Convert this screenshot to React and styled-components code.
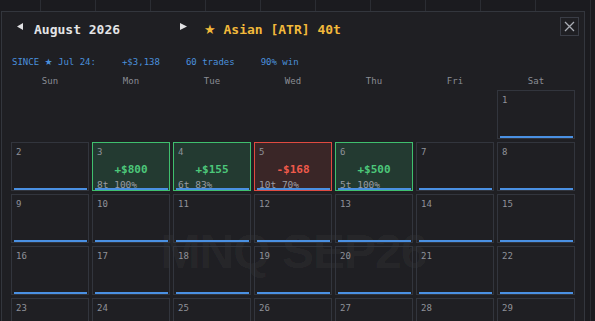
import React from 'react'
import styled, { createGlobalStyle, css } from 'styled-components'

const GlobalStyle = createGlobalStyle`
  html, body {
    margin: 0;
    padding: 0;
    background: #1b1b1f;
  }
  * {
    box-sizing: border-box;
  }
`

const MONO = `"DejaVu Sans Mono", "Liberation Mono", monospace`

const Page = styled.div`
  position: relative;
  width: 595px;
  height: 321px;
  overflow: hidden;
  padding: 11px 0 0 1px;
  background-color: #1b1b1f;
  background-image: linear-gradient(to right, #2b2d33 1px, transparent 1px);
  background-size: 55px 100%;
  background-position: 40px 0;
  font-family: ${MONO};
`

const Modal = styled.div`
  width: 584px;
  min-height: 360px;
  padding: 5px 8px 0 9px;
  border: 1px solid #33363d;
  background: #1f1f23;
`

const Header = styled.div`
  display: flex;
  align-items: center;
  height: 19px;
`

const NavButton = styled.button`
  display: flex;
  align-items: center;
  justify-content: center;
  padding: 0;
  margin-left: ${p => p.$offset || 0}px;
  background: none;
  border: none;
  color: #e2e2e4;
  cursor: pointer;
`

const Title = styled.h2`
  width: 146px;
  margin: 5px 0 0 10px;
  font-size: 13px;
  font-weight: bold;
  line-height: 19px;
  color: #e4e4e6;
`

const Strategy = styled.span`
  margin: 5px 0 0 17px;
  font-size: 13px;
  font-weight: bold;
  line-height: 19px;
  color: #f2b93b;
`

const Star = styled.span`
  font-family: "DejaVu Sans", sans-serif;
  font-weight: normal;
`

const CloseButton = styled.button`
  display: flex;
  align-items: center;
  justify-content: center;
  width: 19px;
  height: 19px;
  padding: 0;
  margin: 0 -3px 0 auto;
  background: none;
  border: 1px solid #3a3d46;
  cursor: pointer;
`

const Stats = styled.div`
  display: flex;
  gap: 26px;
  margin-top: 20px;
  padding-left: 1px;
  font-size: 9px;
  line-height: 12px;
  color: #4a8fdc;
`

const Columns = styled.div`
  display: grid;
  grid-template-columns: repeat(7, 78px);
  column-gap: 3px;
`

const Weekdays = styled(Columns)`
  margin-top: 6px;
  height: 14px;
  font-size: 9px;
  line-height: 14px;
  color: #8a8d94;
  text-align: center;
`

const Board = styled(Columns)`
  position: relative;
  margin-top: 2px;
  grid-auto-rows: 49px;
  row-gap: 3px;
`

const Watermark = styled.div`
  position: absolute;
  top: 138px;
  left: 0;
  right: 0;
  font-family: "Liberation Sans", Arial, sans-serif;
  font-size: 48px;
  font-weight: bold;
  line-height: 48px;
  letter-spacing: -1px;
  text-align: center;
  color: rgba(255, 255, 255, 0.045);
  pointer-events: none;
  white-space: nowrap;
`

const tones = {
  win: css`
    border-color: #3fbf6e;
    background: #233a31;
  `,
  loss: css`
    border-color: #e04a40;
    background: #3a2627;
  `,
}

const Cell = styled.div`
  position: relative;
  display: flex;
  flex-direction: column;
  padding: 4px 4px 0;
  border: 1px solid #32353d;
  background: transparent;
  ${p => tones[p.$tone]}
`

const DayNum = styled.span`
  font-size: 9px;
  line-height: 11px;
  color: #8f9299;
`

const Value = styled.span`
  margin-top: 5px;
  font-size: 11px;
  font-weight: bold;
  line-height: 14px;
  text-align: center;
  color: ${p => (p.$tone === 'loss' ? '#f05a4b' : '#4cc77a')};
`

const Meta = styled.span`
  margin-top: auto;
  font-size: 9.5px;
  line-height: 10px;
  color: #9a9ca3;
  white-space: nowrap;
`

const Bar = styled.div`
  position: absolute;
  left: 2px;
  right: 1px;
  bottom: 0;
  height: 2px;
  background: #4a90e2;
`

const Arrow = ({ dir }) => (
  <svg width="7" height="7" viewBox="0 0 7 7">
    <polygon points={dir === 'left' ? '6,0 6,7 0,3.5' : '0,0 0,7 7,3.5'} fill="currentColor" />
  </svg>
)

const trades = {
  3: { pnl: '+$800', meta: '8t 100%', tone: 'win' },
  4: { pnl: '+$155', meta: '6t 83%', tone: 'win' },
  5: { pnl: '-$168', meta: '10t 70%', tone: 'loss' },
  6: { pnl: '+$500', meta: '5t 100%', tone: 'win' },
}

const weekdays = ['Sun', 'Mon', 'Tue', 'Wed', 'Thu', 'Fri', 'Sat']

export default function App() {
  const leading = 6
  const days = Array.from({ length: 31 }, (_, i) => i + 1)

  return (
    <>
      <GlobalStyle />
      <Page>
        <Modal>
          <Header>
            <NavButton $offset={6} aria-label="Previous month"><Arrow dir="left" /></NavButton>
            <Title>August 2026</Title>
            <NavButton aria-label="Next month"><Arrow dir="right" /></NavButton>
            <Strategy><Star>★</Star> Asian [ATR] 40t</Strategy>
            <CloseButton aria-label="Close">
              <svg width="11" height="11" viewBox="0 0 11 11">
                <path d="M1 1 L10 10 M10 1 L1 10" stroke="#a9acb3" strokeWidth="1.3" />
              </svg>
            </CloseButton>
          </Header>

          <Stats>
            <span>SINCE <Star>★</Star> Jul 24:</span>
            <span>+$3,138</span>
            <span>60 trades</span>
            <span>90% win</span>
          </Stats>

          <Weekdays>
            {weekdays.map(d => <span key={d}>{d}</span>)}
          </Weekdays>

          <Board>
            <Watermark>MNQ SEP26</Watermark>
            {Array.from({ length: leading }, (_, i) => <div key={'e' + i} />)}
            {days.map(day => {
              const t = trades[day]
              return (
                <Cell key={day} $tone={t && t.tone}>
                  <DayNum>{day}</DayNum>
                  {t && <Value $tone={t.tone}>{t.pnl}</Value>}
                  {t && <Meta>{t.meta}</Meta>}
                  <Bar />
                </Cell>
              )
            })}
          </Board>
        </Modal>
      </Page>
    </>
  )
}
